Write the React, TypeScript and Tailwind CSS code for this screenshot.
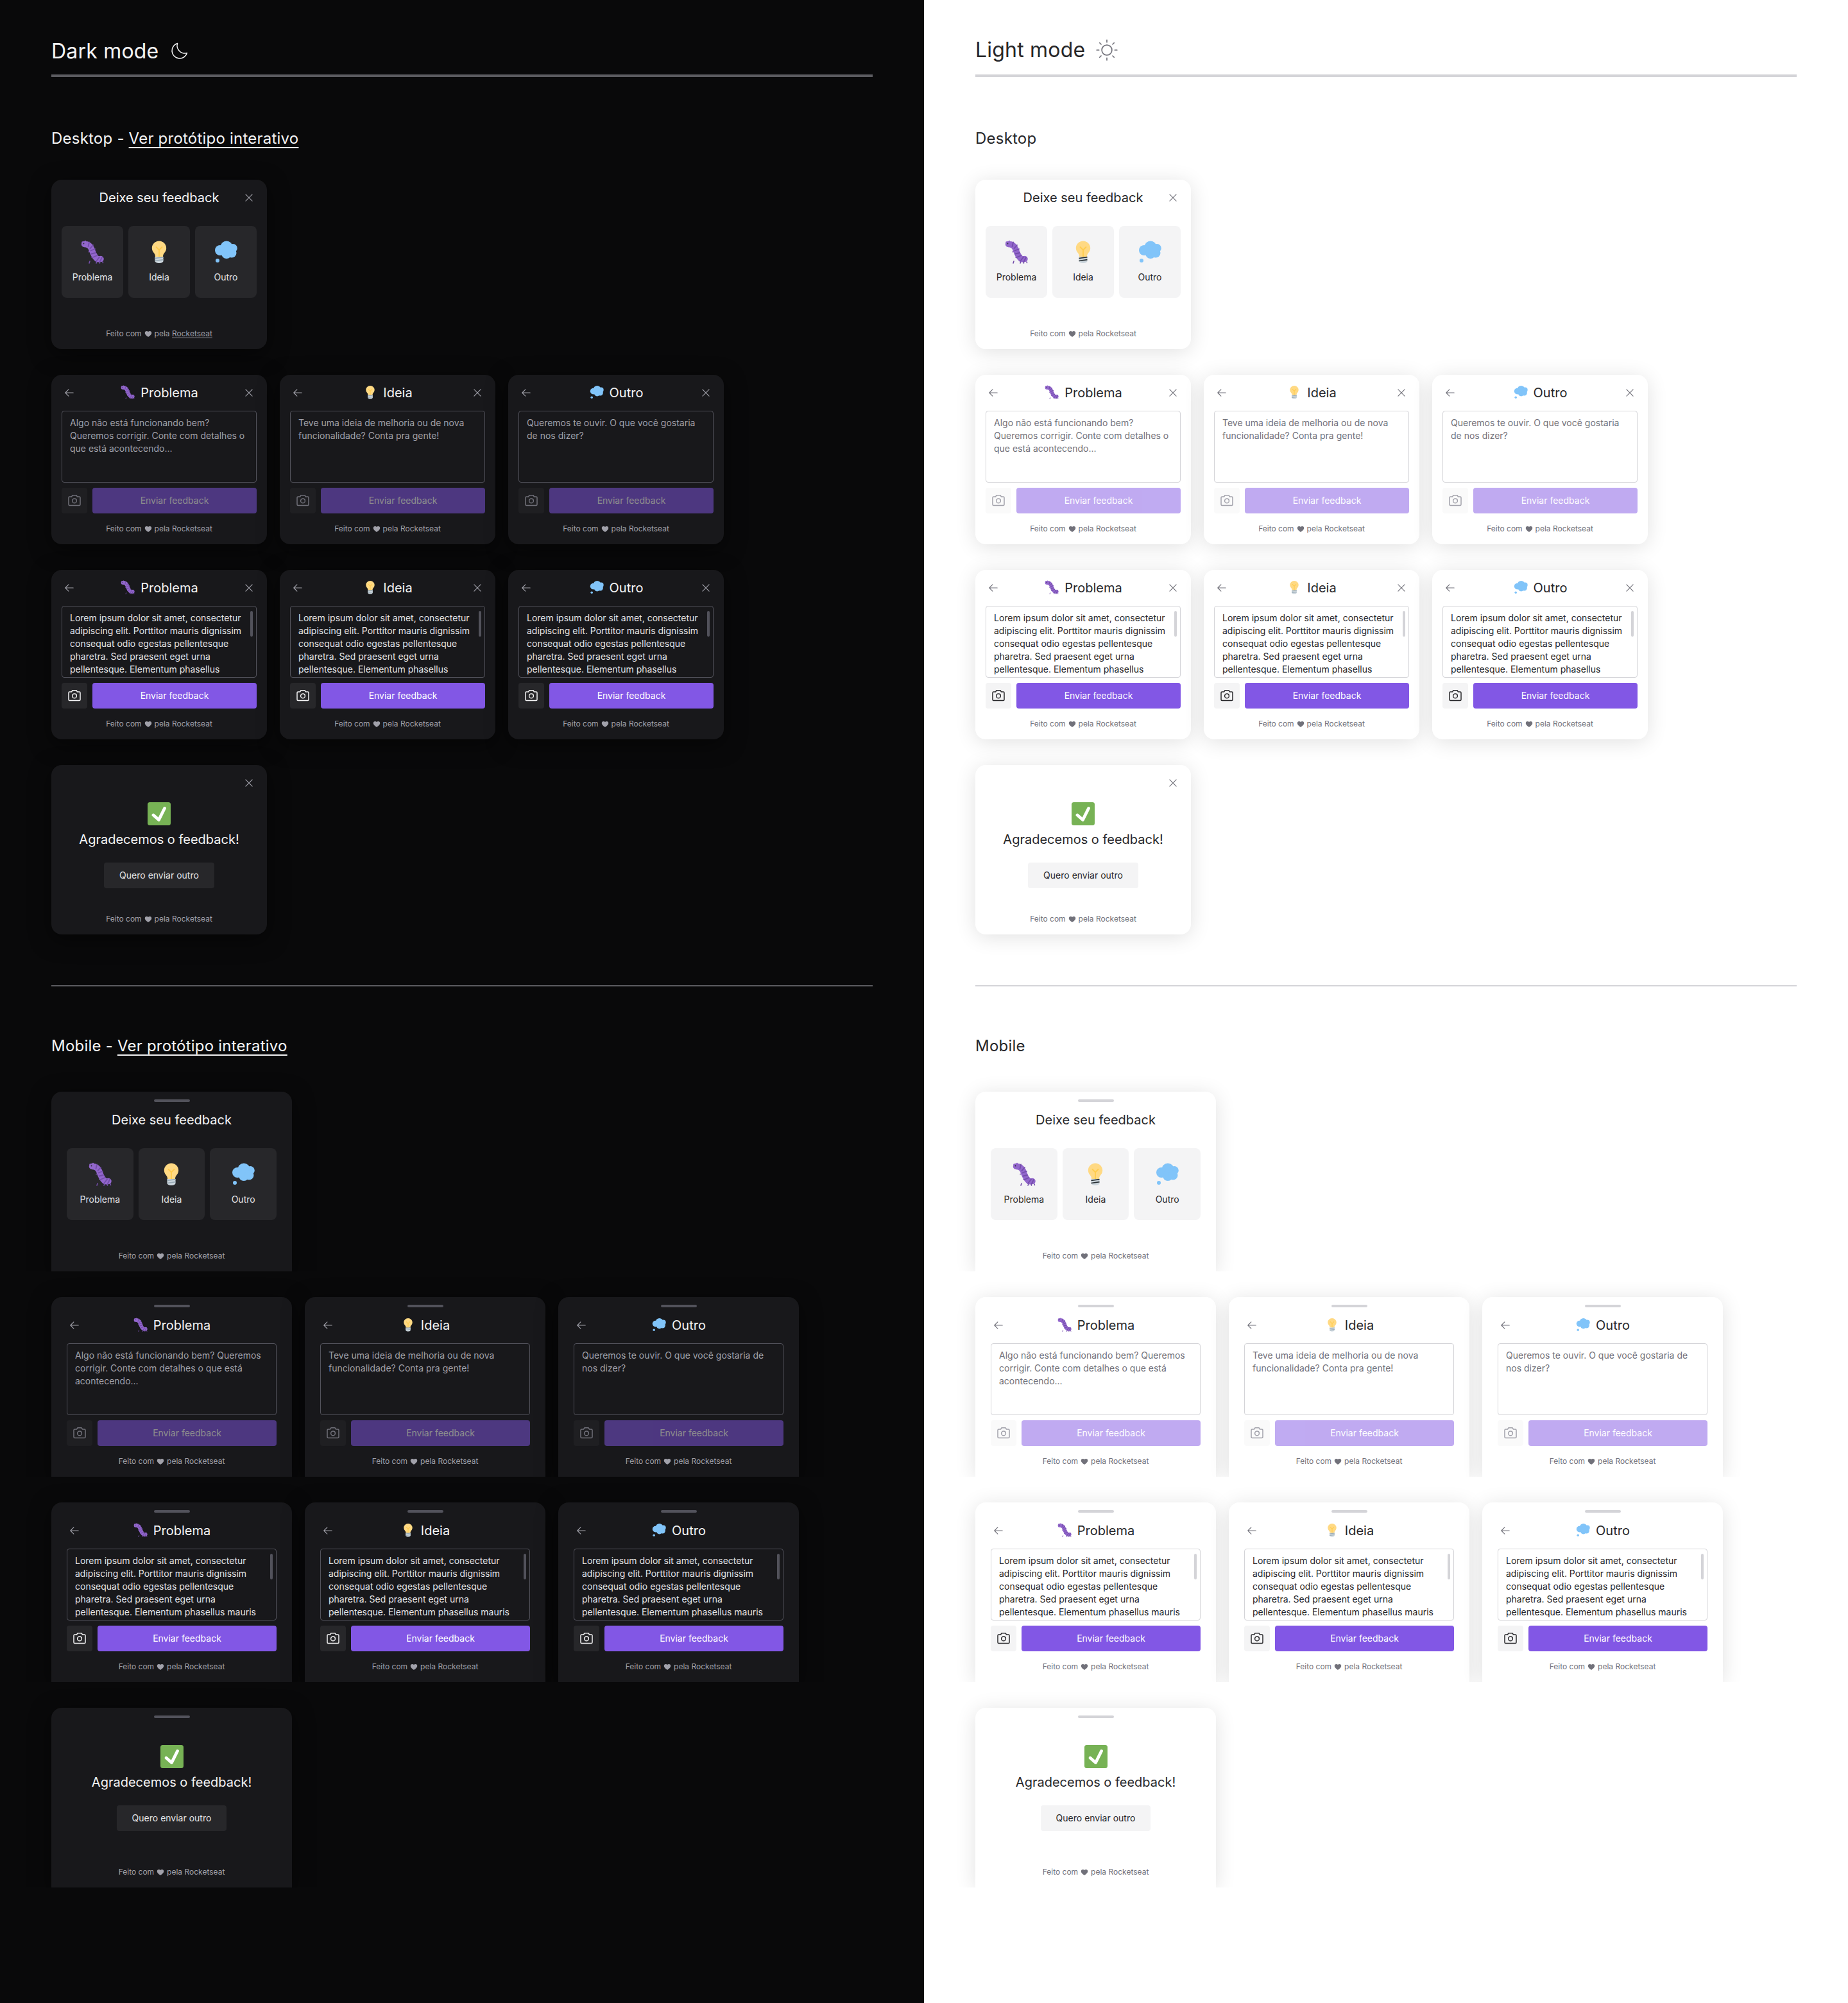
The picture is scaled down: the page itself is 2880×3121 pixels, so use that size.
import { PiArrowLeft, PiCamera, PiHeartFill, PiMoonLight, PiSunLight, PiX } from 'react-icons/pi';

const LOREM =
  'Lorem ipsum dolor sit amet, consectetur adipiscing elit. Porttitor mauris dignissim consequat odio egestas pellentesque pharetra. Sed praesent eget urna pellentesque. Elementum phasellus';

const darkTheme = {
  panel: 'bg-[#09090a]',
  strong: 'text-[#f4f4f5]',
  body: 'text-[#e4e4e7]',
  muted: 'text-[#a1a1aa]',
  placeholder: 'text-[#a1a1aa]',
  iconButton: 'text-[#a1a1aa]',
  card: 'bg-[#18181b] shadow-[0_8px_32px_rgba(0,0,0,0.5)]',
  tile: 'bg-[#27272a]',
  field: 'border-[#52525b]',
  thumb: 'bg-[#52525b]',
  rule: 'bg-[#5b5b60]',
  cameraIdle: 'bg-[#1f1f22] text-[#71717a]',
  cameraActive: 'bg-[#27272a] text-[#f4f4f5]',
  bulbStripe: '#99AAB5',
};

const lightTheme = {
  panel: 'bg-white',
  strong: 'text-[#27272a]',
  body: 'text-[#27272a]',
  muted: 'text-[#71717a]',
  placeholder: 'text-[#71717a]',
  iconButton: 'text-[#71717a]',
  card: 'bg-white shadow-[0_4px_32px_rgba(0,0,0,0.12)]',
  tile: 'bg-[#f4f4f5]',
  field: 'border-[#d4d4d8]',
  thumb: 'bg-[#d4d4d8]',
  rule: 'bg-[#d4d4d8]',
  cameraIdle: 'bg-[#fafafa] text-[#a1a1aa]',
  cameraActive: 'bg-[#f4f4f5] text-[#27272a]',
  bulbStripe: '#292F33',
};

type Theme = typeof darkTheme;
type Kind = 'problem' | 'idea' | 'other';

const KINDS: Record<Kind, { label: string; placeholder: string }> = {
  problem: {
    label: 'Problema',
    placeholder: 'Algo não está funcionando bem? Queremos corrigir. Conte com detalhes o que está acontecendo...',
  },
  idea: {
    label: 'Ideia',
    placeholder: 'Teve uma ideia de melhoria ou de nova funcionalidade? Conta pra gente!',
  },
  other: {
    label: 'Outro',
    placeholder: 'Queremos te ouvir. O que você gostaria de nos dizer?',
  },
};

const ORDER: Kind[] = ['problem', 'idea', 'other'];

function BugEmoji({ size }: { size: number }) {
  return (
    <svg width={size} height={size} viewBox="0 0 40 40" fill="none">
      <path d="M12 37l1-3M24 34.500l-1 2.500M28 35l.5 2M33 35l.5 1.500M18 27l-2 1M14 19l-3 .5M12 13l-2.500-.5" stroke="#744EAA" strokeWidth="1.600" strokeLinecap="round" transform="translate(3 -1)" />
      <circle cx="4.500" cy="3.500" r="1.200" fill="#9266CC" />
      <circle cx="9" cy="2" r="1.200" fill="#9266CC" />
      <path d="M7.500 6.500C13 6.500 16.500 8.500 18.500 13.500C20.500 19 22 25 27 29C29 30 31 30 33 29.500" stroke="#9266CC" strokeWidth="9.500" strokeLinecap="round" />
      <path d="M15 3.500L13.500 10M21 8L16.500 13M24 14L17.500 16.500M25 20L18.500 21.500M27.500 24L20.500 27M31 26.500L26 33M35 27L31.500 34" stroke="#744EAA" strokeWidth="1.800" strokeLinecap="round" />
      <circle cx="6.500" cy="5.500" r="0.900" fill="#292F33" />
    </svg>
  );
}

function BulbEmoji({ size, stripe }: { size: number; stripe: string }) {
  return (
    <svg width={size} height={size} viewBox="0 0 40 40" fill="none">
      <path d="M20 1.500C13.700 1.500 8.800 6.500 8.800 12.500C8.800 16.500 10.800 18.800 12.500 21C13.700 22.700 14 24.500 14 26H26C26 24.500 26.300 22.700 27.500 21C29.200 18.800 31.200 16.500 31.200 12.500C31.200 6.500 26.300 1.500 20 1.500Z" fill="#FFD983" />
      <path d="M20 26V15.500M15.500 11L20 15.500L24.500 11" stroke="#FFCC4D" strokeWidth="1.800" strokeLinecap="round" strokeLinejoin="round" />
      <path d="M13.500 26H26.500V32.500C26.500 34.500 23.500 36 20 36C16.500 36 13.500 34.500 13.500 32.500Z" fill="#CCD6DD" />
      <path d="M13.500 28.500L26.500 26.700M13.500 32.500L26.500 30.700" stroke={stripe} strokeWidth="1.700" />
    </svg>
  );
}

function BalloonEmoji({ size }: { size: number }) {
  return (
    <svg width={size} height={size} viewBox="0 0 40 40" fill="#81C4F9">
      <circle cx="21" cy="11" r="9.500" />
      <circle cx="11" cy="16" r="8" />
      <circle cx="31" cy="12.700" r="6.800" />
      <circle cx="21" cy="21" r="8" />
      <circle cx="29" cy="20" r="7.500" />
      <circle cx="7" cy="32" r="3" />
    </svg>
  );
}

function CheckEmoji() {
  return (
    <svg width={40} height={40} viewBox="0 0 40 40" fill="none">
      <rect x="2" y="2" width="36" height="36" rx="3.500" fill="#77B255" />
      <path d="M11 22L19.500 29.500L28.500 11.500" stroke="white" strokeWidth="4.800" strokeLinecap="round" strokeLinejoin="round" />
    </svg>
  );
}

function KindEmoji({ kind, size, theme }: { kind: Kind; size: number; theme: Theme }) {
  if (kind === 'problem') return <BugEmoji size={size} />;
  if (kind === 'idea') return <BulbEmoji size={size} stripe={size > 30 ? theme.bulbStripe : '#99AAB5'} />;
  return <BalloonEmoji size={size} />;
}

function Footer({ theme, linked }: { theme: Theme; linked?: boolean }) {
  return (
    <div className={`mt-auto flex h-4 items-center justify-center gap-1 text-xs leading-4 ${theme.muted}`}>
      <span>Feito com</span>
      <PiHeartFill size={12} />
      <span>
        pela <span className={linked ? 'underline underline-offset-2' : ''}>Rocketseat</span>
      </span>
    </div>
  );
}

function Card({ theme, mobile, children }: { theme: Theme; mobile?: boolean; children: React.ReactNode }) {
  const shape = mobile
    ? 'relative h-[280px] w-[375px] rounded-t-2xl px-6 pt-8 pb-4 [clip-path:inset(-48px_-48px_0_-48px)]'
    : 'h-[264px] w-[336px] rounded-2xl p-4';
  return (
    <div className={`flex flex-col ${shape} ${theme.card}`}>
      {mobile && <div className={`absolute top-3 left-1/2 h-1 w-14 -translate-x-1/2 rounded-full ${theme.thumb}`} />}
      {children}
    </div>
  );
}

function Header({ theme, mobile, back, children }: { theme: Theme; mobile?: boolean; back?: boolean; children?: React.ReactNode }) {
  return (
    <div className="flex h-6 w-full items-center justify-between">
      <div className={`flex w-6 justify-center ${theme.iconButton}`}>{back && <PiArrowLeft size={18} />}</div>
      <div className={`flex items-center gap-2 text-xl leading-6 ${theme.strong}`}>{children}</div>
      <div className={`flex w-6 justify-center ${theme.iconButton}`}>{!mobile && <PiX size={18} />}</div>
    </div>
  );
}

function SelectCard({ theme, mobile, linked }: { theme: Theme; mobile?: boolean; linked?: boolean }) {
  return (
    <Card theme={theme} mobile={mobile}>
      <Header theme={theme} mobile={mobile}>
        Deixe seu feedback
      </Header>
      <div className="mt-8 grid grid-cols-3 gap-2">
        {ORDER.map((kind) => (
          <div key={kind} className={`flex h-28 flex-col items-center justify-center gap-2 rounded-lg ${theme.tile}`}>
            <KindEmoji kind={kind} size={40} theme={theme} />
            <span className={`text-sm leading-5 ${theme.body}`}>{KINDS[kind].label}</span>
          </div>
        ))}
      </div>
      <Footer theme={theme} linked={linked} />
    </Card>
  );
}

function FormCard({ theme, mobile, kind, filled }: { theme: Theme; mobile?: boolean; kind: Kind; filled?: boolean }) {
  return (
    <Card theme={theme} mobile={mobile}>
      <Header theme={theme} mobile={mobile} back>
        <KindEmoji kind={kind} size={24} theme={theme} />
        {KINDS[kind].label}
      </Header>
      <div className={`relative mt-4 h-28 overflow-hidden rounded border px-3 py-2 text-sm leading-5 ${theme.field} ${filled ? theme.body : theme.placeholder}`}>
        {filled ? (mobile ? `${LOREM} mauris` : LOREM) : KINDS[kind].placeholder}
        {filled && <div className={`absolute top-[7px] right-[5px] h-10 w-1 rounded-full ${theme.thumb}`} />}
      </div>
      <div className="mt-2 flex gap-2">
        <div className={`flex h-10 w-10 shrink-0 items-center justify-center rounded ${filled ? theme.cameraActive : theme.cameraIdle}`}>
          <PiCamera size={24} />
        </div>
        <div className={`flex h-10 flex-1 items-center justify-center rounded bg-[#8257e5] text-sm text-white ${filled ? '' : 'opacity-50'}`}>
          Enviar feedback
        </div>
      </div>
      <Footer theme={theme} />
    </Card>
  );
}

function DoneCard({ theme, mobile }: { theme: Theme; mobile?: boolean }) {
  return (
    <Card theme={theme} mobile={mobile}>
      {!mobile && <Header theme={theme} />}
      <div className={`flex flex-col items-center ${mobile ? 'mt-6' : 'mt-4'}`}>
        <CheckEmoji />
        <span className={`mt-2 text-xl leading-6 ${theme.strong}`}>Agradecemos o feedback!</span>
        <div className={`mt-6 flex h-10 items-center rounded px-6 text-sm ${theme.tile} ${theme.body}`}>Quero enviar outro</div>
      </div>
      <Footer theme={theme} />
    </Card>
  );
}

function CardSet({ theme, mobile, linked }: { theme: Theme; mobile?: boolean; linked?: boolean }) {
  return (
    <div className="flex flex-col gap-10">
      <SelectCard theme={theme} mobile={mobile} linked={linked} />
      <div className="flex gap-5">
        {ORDER.map((kind) => (
          <FormCard key={kind} theme={theme} mobile={mobile} kind={kind} />
        ))}
      </div>
      <div className="flex gap-5">
        {ORDER.map((kind) => (
          <FormCard key={kind} theme={theme} mobile={mobile} kind={kind} filled />
        ))}
      </div>
      <DoneCard theme={theme} mobile={mobile} />
    </div>
  );
}

function SectionTitle({ theme, label, link }: { theme: Theme; label: string; link?: boolean }) {
  return (
    <h2 className={`text-2xl leading-8 tracking-[0.22px] ${theme.strong}`}>
      {label}
      {link && (
        <>
          {' - '}
          <span className="underline decoration-[1.5px] underline-offset-[5px] [text-decoration-skip-ink:none]">Ver protótipo interativo</span>
        </>
      )}
    </h2>
  );
}

function Panel({ theme, dark }: { theme: Theme; dark?: boolean }) {
  return (
    <div className={`px-20 ${dark ? 'pt-[60px]' : 'pt-[58px]'} ${theme.panel}`}>
      <h1 className={`flex h-10 items-center gap-4 text-[32px] leading-10 tracking-[0.2px] ${theme.strong}`}>
        {dark ? 'Dark mode' : 'Light mode'}
        {dark ? <PiMoonLight size={32} /> : <PiSunLight size={36} className="text-[#71717a]" />}
      </h1>
      <div className={`h-1 ${dark ? 'mt-4' : 'mt-[18px]'} ${theme.rule}`} />
      <div className="mt-20">
        <SectionTitle theme={theme} label="Desktop" link={dark} />
      </div>
      <div className="mt-12">
        <CardSet theme={theme} linked={dark} />
      </div>
      <div className={`mt-[79px] h-0.5 ${theme.rule}`} />
      <div className="mt-[77px]">
        <SectionTitle theme={theme} label="Mobile" link={dark} />
      </div>
      <div className="mt-[55px]">
        <CardSet theme={theme} mobile />
      </div>
    </div>
  );
}

export default function App() {
  return (
    <div className="grid h-[3121px] w-[2880px] grid-cols-2 overflow-hidden antialiased [font-family:Inter,sans-serif]">
      <Panel theme={darkTheme} dark />
      <Panel theme={lightTheme} />
    </div>
  );
}
